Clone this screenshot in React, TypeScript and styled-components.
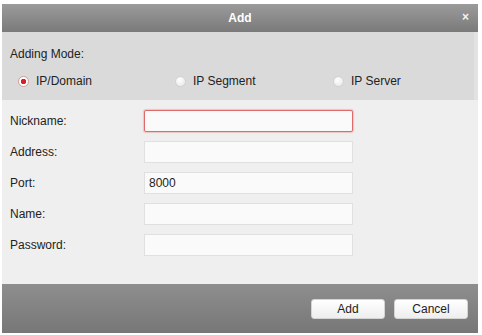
import React, { useState } from "react";
import styled, { createGlobalStyle } from "styled-components";

const GlobalStyle = createGlobalStyle`
  html, body { margin: 0; padding: 0; background: #fff; }
  body { font-family: "Liberation Sans", Arial, sans-serif; font-size: 12px; color: #222; }
`;

const Page = styled.div`
  padding: 4px 4px 0 2px;
`;

const Dialog = styled.div`
  width: 476px;
  display: flex;
  flex-direction: column;
`;

const TitleBar = styled.div`
  height: 28px;
  background: linear-gradient(#9b9b9b, #7a7a7a);
  display: flex;
  align-items: center;
  justify-content: center;
  position: relative;
  color: #fff;
  font-weight: bold;
  font-size: 12px;
`;

const Close = styled.span`
  position: absolute;
  right: 9px;
  top: 6px;
  font-size: 12px;
  font-weight: bold;
  color: #f4f4f4;
`;

const ModeSection = styled.div`
  background: #dadada;
  height: 68px;
  padding: 15px 0 0 8px;
  box-sizing: border-box;
  border-right: 4px solid #e2e2e2;
`;

const ModeRow = styled.div`
  display: flex;
  margin-top: 13px;
  padding-left: 8px;
`;

const RadioOption = styled.label<{ $w: number }>`
  display: flex;
  align-items: center;
  gap: 7px;
  width: ${(p) => p.$w}px;
  cursor: pointer;
`;

const RadioDot = styled.span<{ $on?: boolean }>`
  width: 11px;
  height: 11px;
  border-radius: 50%;
  box-sizing: border-box;
  border: 1px solid ${(p) => (p.$on ? "#d79a9a" : "#d2d2d2")};
  background: ${(p) =>
    p.$on
      ? "radial-gradient(circle, #d1212a 0 2.5px, #fff 3px)"
      : "radial-gradient(circle at 40% 35%, #ffffff, #e4e4e4)"};
`;

const FormSection = styled.div`
  background: #efefef;
  height: 184px;
  padding: 10px 0 0 8px;
  box-sizing: border-box;
  display: flex;
  flex-direction: column;
  gap: 9px;
`;

const Row = styled.div`
  display: flex;
  align-items: center;
  height: 22px;
`;

const Label = styled.div`
  width: 134px;
`;

const Field = styled.input<{ $focus?: boolean }>`
  width: 209px;
  height: 22px;
  box-sizing: border-box;
  margin: 0;
  padding: 0 4px;
  font-family: inherit;
  font-size: 12px;
  color: #222;
  background: #fafafa;
  outline: none;
  border: 1px solid ${(p) => (p.$focus ? "#e06a6a" : "#e0e0e0")};
  border-radius: ${(p) => (p.$focus ? "2px" : "0")};
  box-shadow: ${(p) => (p.$focus ? "0 0 1px 1px rgba(230,120,120,0.35)" : "none")};
`;

const Footer = styled.div`
  height: 49px;
  background: linear-gradient(#8e8e8e, #777777);
  display: flex;
  align-items: center;
  justify-content: flex-end;
  gap: 9px;
  padding: 1px 10px 0 0;
  box-sizing: border-box;
`;

const Button = styled.button`
  width: 74px;
  height: 20px;
  font-family: inherit;
  font-size: 12px;
  color: #222;
  border: 1px solid #d4d4d4;
  border-radius: 3px;
  background: linear-gradient(#ffffff, #eeeeee);
  padding: 0;
`;

const modes = [
  { label: "IP/Domain", w: 157 },
  { label: "IP Segment", w: 158 },
  { label: "IP Server", w: 120 },
];

const fields = [
  { label: "Nickname:", value: "", focus: true },
  { label: "Address:", value: "" },
  { label: "Port:", value: "8000" },
  { label: "Name:", value: "" },
  { label: "Password:", value: "" },
];

const App = () => {
  const [mode, setMode] = useState(0);
  return (
    <Page>
      <GlobalStyle />
      <Dialog>
        <TitleBar>
          Add
          <Close>×</Close>
        </TitleBar>
        <ModeSection>
          <div>Adding Mode:</div>
          <ModeRow>
            {modes.map((m, i) => (
              <RadioOption key={m.label} $w={m.w} onClick={() => setMode(i)}>
                <RadioDot $on={mode === i} />
                {m.label}
              </RadioOption>
            ))}
          </ModeRow>
        </ModeSection>
        <FormSection>
          {fields.map((f) => (
            <Row key={f.label}>
              <Label>{f.label}</Label>
              <Field
                $focus={f.focus}
                defaultValue={f.value}
                type={f.label === "Password:" ? "password" : "text"}
              />
            </Row>
          ))}
        </FormSection>
        <Footer>
          <Button>Add</Button>
          <Button>Cancel</Button>
        </Footer>
      </Dialog>
    </Page>
  );
};

export default App;
